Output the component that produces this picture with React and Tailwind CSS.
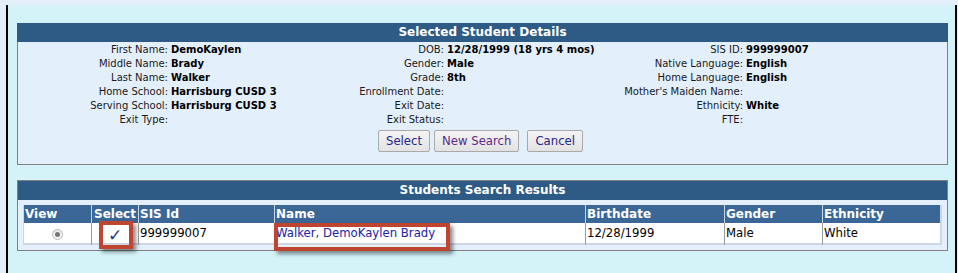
import React from "react";

const details = [
  ["First Name:", "DemoKaylen", "DOB:", "12/28/1999 (18 yrs 4 mos)", "SIS ID:", "999999007"],
  ["Middle Name:", "Brady", "Gender:", "Male", "Native Language:", "English"],
  ["Last Name:", "Walker", "Grade:", "8th", "Home Language:", "English"],
  ["Home School:", "Harrisburg CUSD 3", "Enrollment Date:", "", "Mother's Maiden Name:", ""],
  ["Serving School:", "Harrisburg CUSD 3", "Exit Date:", "", "Ethnicity:", "White"],
  ["Exit Type:", "", "Exit Status:", "", "FTE:", ""],
];

function Btn({ children, className = "", color = "text-[#26268a]" }) {
  return (
    <button
      className={`h-[22px] px-[7px] border border-[#a9a9a9] rounded-[2px] bg-gradient-to-b from-[#f4f4f4] to-[#e2e2e2] text-[11.7px] leading-[20px] ${color} ${className}`}
      style={{ fontFamily: "'DejaVu Sans', sans-serif" }}
    >
      {children}
    </button>
  );
}

export default function App() {
  const font = { fontFamily: "'DejaVu Sans', Verdana, sans-serif" };
  return (
    <div className="w-[958px] h-[273px] bg-[#e4effa] overflow-hidden" style={font}>
      <div className="mt-[5px] ml-[6px] w-[951px] h-[268px] border-l-2 border-r-2 border-black bg-[#d3f3f8] pt-[18px] pl-[9px] pr-[7px]">
        {/* Selected Student Details */}
        <div className="w-[931px]">
          <div className="h-[19px] bg-[#2e5a86] text-white font-bold text-[12px] leading-[19px] text-center">
            Selected Student Details
          </div>
          <div className="bg-[#e3effb] border-x border-b border-[#808080] pt-[1px] pb-[12px]">
            <div className="grid grid-cols-[150px_176px_100px_175px_124px_1fr] text-[10px] leading-[14px] text-[#1a1a1a]">
              {details.map((r, i) => (
                <React.Fragment key={i}>
                  <div className="h-[14px] text-right whitespace-nowrap">{r[0]}</div>
                  <div className="h-[14px] pl-[3px] font-bold text-black whitespace-nowrap">{r[1]}</div>
                  <div className="h-[14px] text-right whitespace-nowrap">{r[2]}</div>
                  <div className="h-[14px] pl-[3px] font-bold text-black whitespace-nowrap">{r[3]}</div>
                  <div className="h-[14px] text-right whitespace-nowrap">{r[4]}</div>
                  <div className="h-[14px] pl-[3px] font-bold text-black whitespace-nowrap">{r[5]}</div>
                </React.Fragment>
              ))}
            </div>
            <div className="mt-[3px] flex justify-center pr-[4px]">
              <Btn className="mr-[4px]">Select</Btn>
              <Btn className="mr-[8px]" color="text-[#5a2a8c]">New Search</Btn>
              <Btn>Cancel</Btn>
            </div>
          </div>
        </div>

        {/* Students Search Results */}
        <div className="w-[931px] mt-[15px] border border-[#808080]">
          <div className="h-[19px] bg-[#2e5a86] text-white font-bold text-[12px] leading-[19px] text-center">
            Students Search Results
          </div>
          <div className="bg-[#e3effb] pt-[5px] pb-[5px] px-[5px]">
            <div className="w-[919px] border-l border-r-2 border-b-2 border-[#cdd6e2]">
              <div className="grid grid-cols-[67px_47px_136px_311px_139px_98px_118px] h-[18px] bg-[#3b6797] text-white font-bold text-[12px] leading-[18px]">
                <div className="pl-[1px]">View</div>
                <div className="pl-[2px] border-l border-[#c9d5e3] whitespace-nowrap">Select</div>
                <div className="pl-[1px] border-l border-[#c9d5e3]">SIS Id</div>
                <div className="pl-[1px] border-l border-[#c9d5e3]">Name</div>
                <div className="pl-[1px] border-l border-[#c9d5e3]">Birthdate</div>
                <div className="pl-[1px] border-l border-[#c9d5e3]">Gender</div>
                <div className="pl-[1px] border-l border-[#c9d5e3]">Ethnicity</div>
              </div>
              <div className="grid grid-cols-[67px_47px_136px_311px_139px_98px_118px] h-[20px] bg-white text-black text-[11.7px] leading-[20px]">
                <div className="flex items-center justify-center">
                  <span className="w-[11px] h-[11px] rounded-full border border-[#b4b4b4] bg-gradient-to-b from-[#e8e8e8] to-[#fafafa] flex items-center justify-center">
                    <span className="w-[5px] h-[5px] rounded-full bg-[#767676]" />
                  </span>
                </div>
                <div className="relative border-l border-[#9a9a9a] flex items-center justify-center">
                  <span className="text-[17px] leading-[20px] text-[#1f3d7a] pt-[2px]">✓</span>
                  <span className="absolute left-[7px] top-[-2px] w-[34px] h-[28px] border-4 border-[#bf4530] shadow-[3px_3px_4px_rgba(0,0,0,0.45)]" />
                </div>
                <div className="pl-[1px] border-l border-[#9a9a9a]">999999007</div>
                <div className="relative pl-[1px] border-l border-[#9a9a9a] text-[#2222a4] whitespace-nowrap">
                  Walker, DemoKaylen Brady
                  <span className="absolute left-[-1px] top-0 w-[176px] h-[28px] border-4 border-[#bf4530] shadow-[3px_3px_4px_rgba(0,0,0,0.45)]" />
                </div>
                <div className="pl-[1px] border-l border-[#9a9a9a]">12/28/1999</div>
                <div className="pl-[1px] border-l border-[#9a9a9a]">Male</div>
                <div className="pl-[1px] border-l border-[#9a9a9a]">White</div>
              </div>
            </div>
          </div>
        </div>
      </div>
    </div>
  );
}
